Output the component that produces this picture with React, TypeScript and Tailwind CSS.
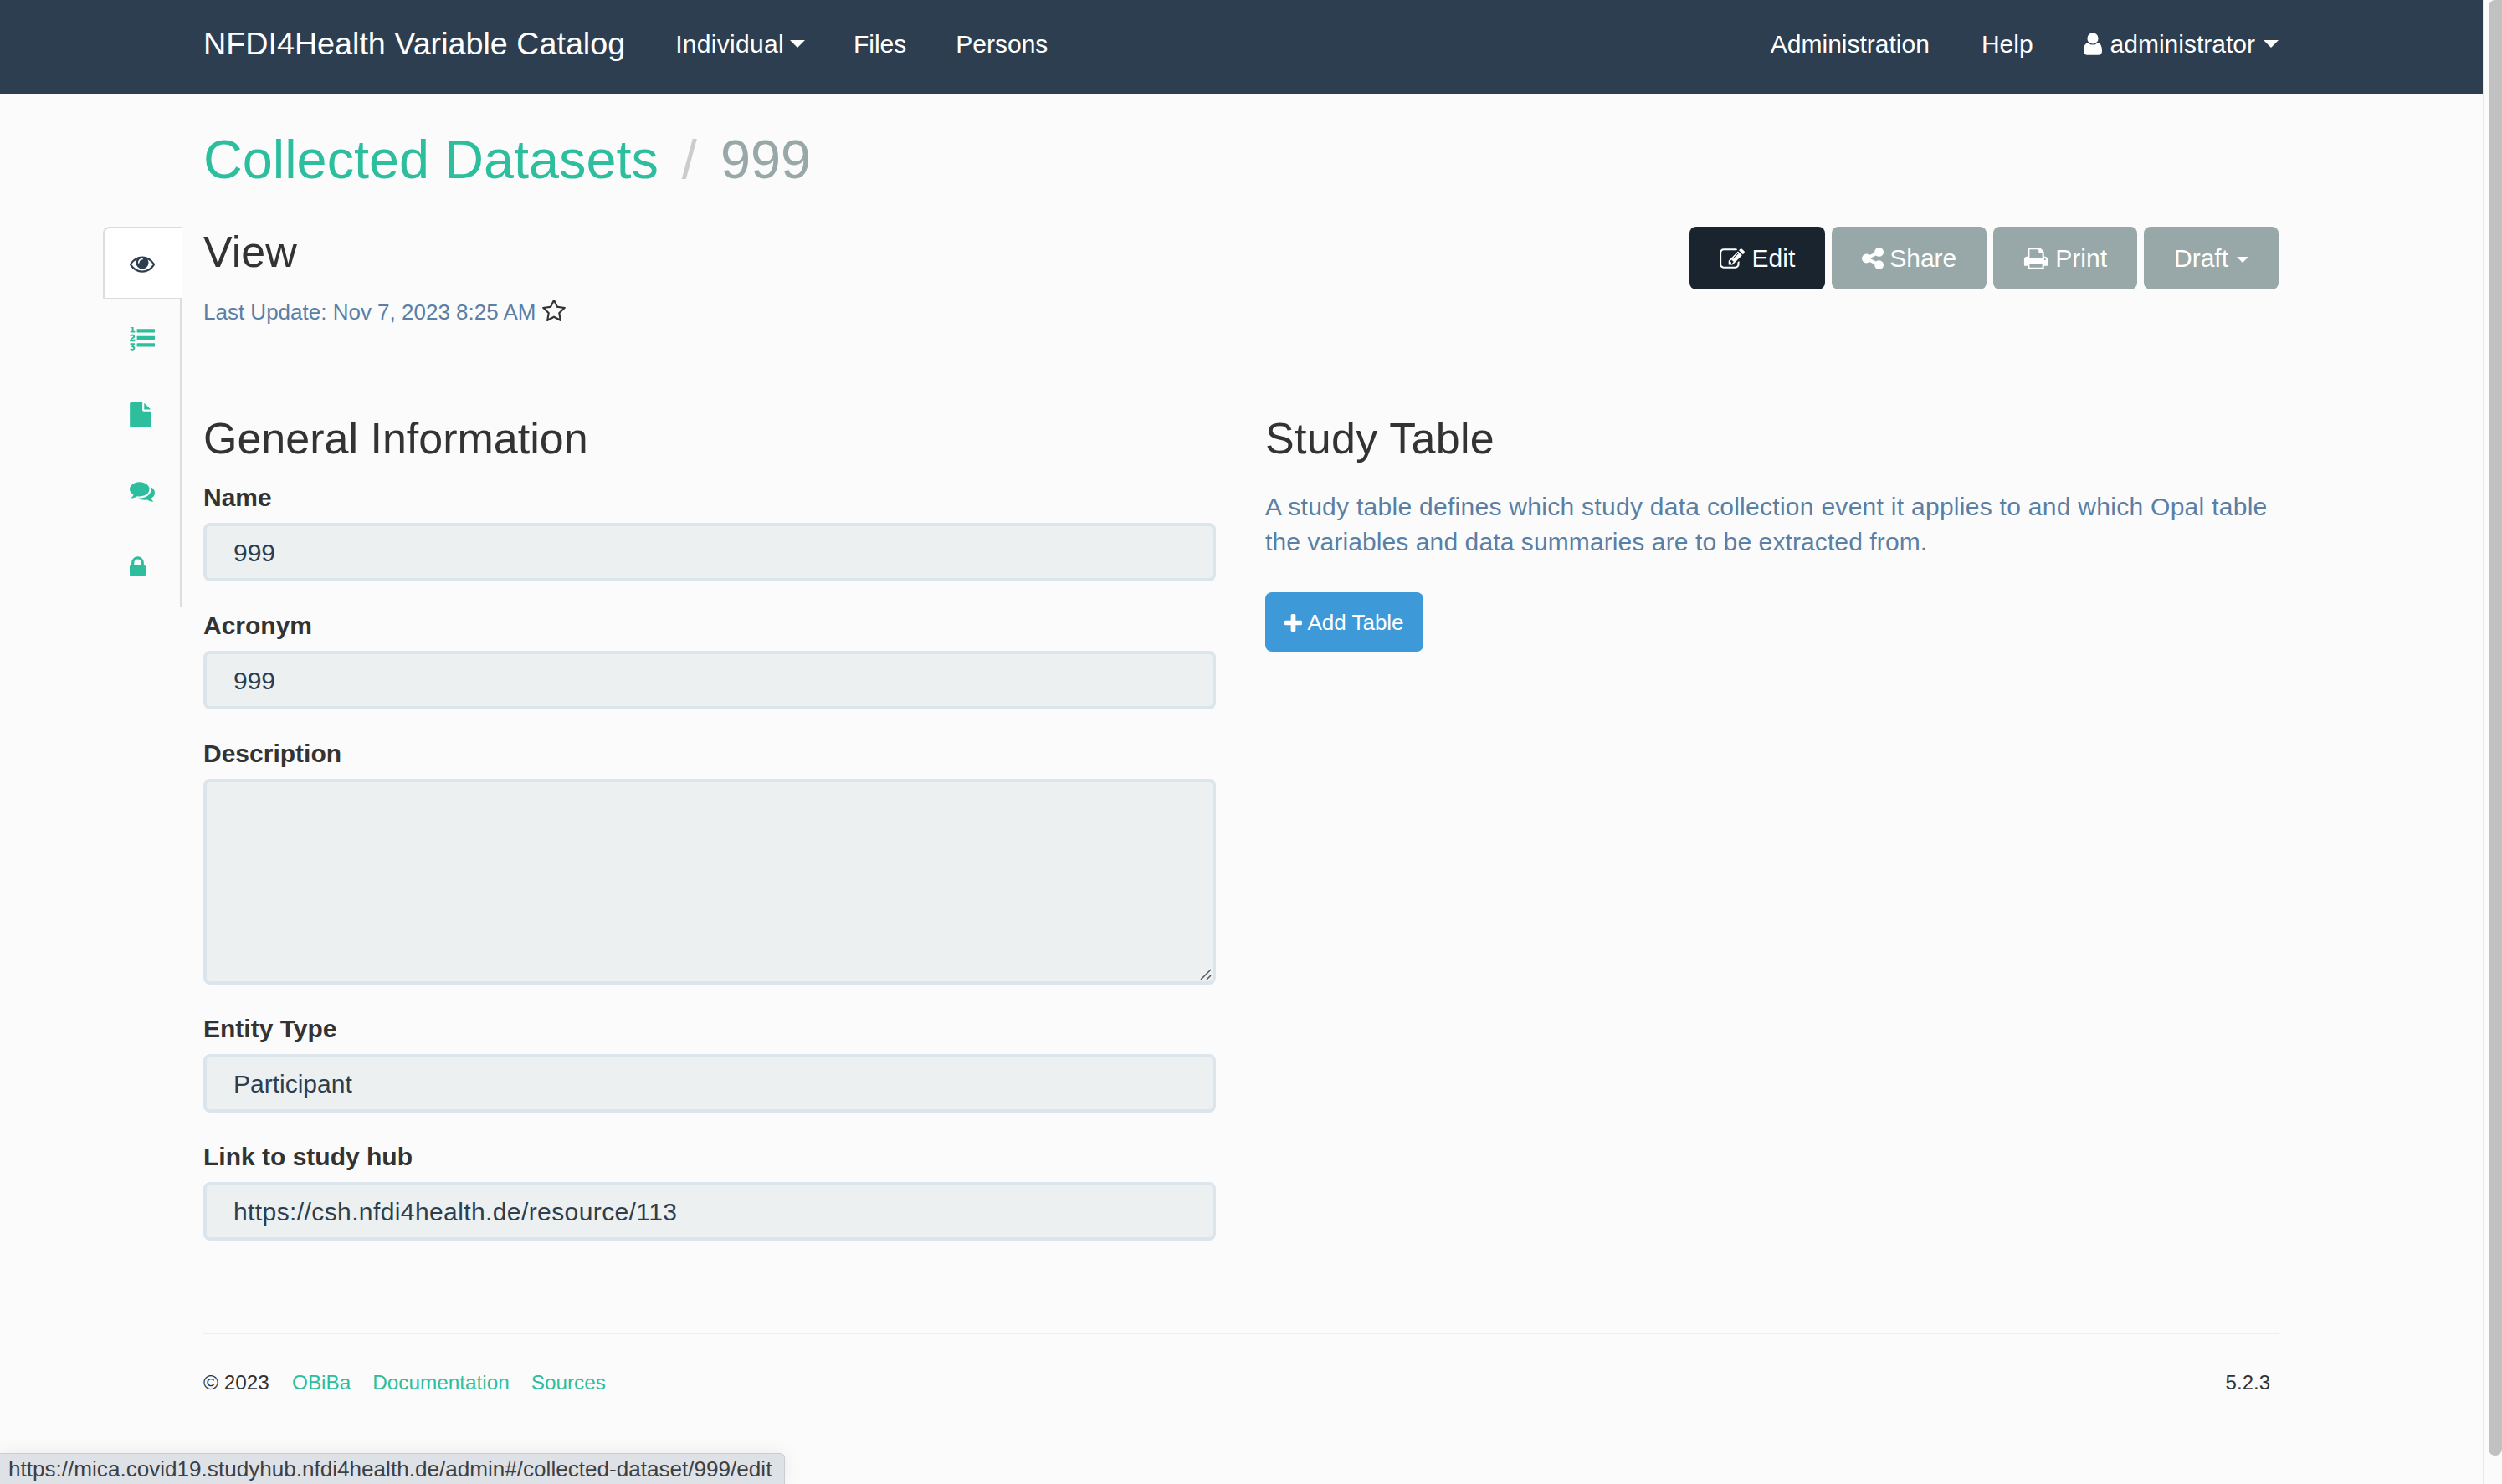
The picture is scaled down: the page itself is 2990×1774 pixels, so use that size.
const paths = {
  eye: "M1664 960q-152-236-381-353 61 104 61 225 0 185-131.5 316.5t-316.5 131.5-316.5-131.5-131.5-316.5q0-121 61-225-229 117-381 353 133 205 333.5 326.5t434.5 121.5 434.5-121.5 333.5-326.5zm-720-384q0-20-14-34t-34-14q-125 0-214.5 89.5t-89.5 214.5q0 20 14 34t34 14 34-14 14-34q0-86 61-147t147-61q20 0 34-14t14-34zm848 384q0 34-20 69-140 230-376.5 368.5t-499.5 138.5-499.5-139-376.5-368q-20-35-20-69t20-69q140-229 376.5-368t499.5-139 499.5 139 376.5 368q20 35 20 69z",
  listOl: "M381 1620q0 80-54.5 126t-135.5 46q-106 0-172-66l57-88q49 45 106 45 29 0 50.5-14.5t21.5-42.5q0-64-105-56l-26-56q8-10 32.5-43.5t42.5-54 37-38.5v-1q-16 0-48.5 1t-48.5 1v53h-106v-152h333v88l-95 115q51 12 81 49t30 88zm2-627v159h-362q-6-36-6-54 0-51 23.5-93t56.5-68 66-47.5 56.5-43.5 23.5-45q0-25-14.5-38.5t-39.5-13.5q-46 0-81 58l-85-59q24-51 71.5-79.5t105.5-28.5q73 0 123 41.5t50 112.5q0 50-34 91.5t-75 64.5-75.5 50.5-35.5 52.5h127v-60h105zm1409 319v192q0 13-9.5 22.5t-22.5 9.5h-1216q-13 0-22.5-9.5t-9.5-22.5v-192q0-14 9-23t23-9h1216q13 0 22.5 9.5t9.5 22.5zm-1408-899v99h-335v-99h107q0-41 .5-122t.5-121v-12h-2q-8 17-50 54l-71-76 136-127h106v404h108zm1408 387v192q0 13-9.5 22.5t-22.5 9.5h-1216q-13 0-22.5-9.5t-9.5-22.5v-192q0-14 9-23t23-9h1216q13 0 22.5 9.5t9.5 22.5zm0-512v192q0 13-9.5 22.5t-22.5 9.5h-1216q-13 0-22.5-9.5t-9.5-22.5v-192q0-13 9.5-22.5t22.5-9.5h1216q13 0 22.5 9.5t9.5 22.5z",
  file: "M1152 512v-472q22 14 36 28l408 408q14 14 28 36h-472zm-128 32q0 40 28 68t68 28h544v1056q0 40-28 68t-68 28h-1344q-40 0-68-28t-28-68v-1600q0-40 28-68t68-28h800v544z",
  comments: "M1408 768q0 139-94 257t-256.5 186.5-353.5 68.5q-86 0-176-16-124 88-278 128-36 9-86 16h-3q-11 0-20.5-8t-11.5-21q-1-3-1-6.5t.5-6.5 2-6l2.5-5 3.5-5.5 4-5 4.5-5 4-4.5q5-6 23-25t26-29.5 22.5-29 25-38.5 20.5-44q-124-72-195-177t-71-224q0-139 94-257t256.5-186.5 353.5-68.5 353.5 68.5 256.5 186.5 94 257zm384 256q0 120-71 224.5t-195 176.5q10 24 20.5 44t25 38.5 22.5 29 26 29.5 23 25q1 1 4 4.5t4.5 5 4 5 3.5 5.5l2.5 5 2 6 .5 6.5-1 6.5q-3 14-13 22t-22 7q-50-7-86-16-154-40-278-128-90 16-176 16-271 0-472-132 58 4 88 4 161 0 309-45t264-129q125-92 192-212t67-254q0-77-23-152 129 71 204 178t75 230z",
  lock: "M640 768h512v-192q0-106-75-181t-181-75-181 75-75 181v192zm832 96v576q0 40-28 68t-68 28h-960q-40 0-68-28t-28-68v-576q0-40 28-68t68-28h32v-192q0-184 132-316t316-132 316 132 132 316v192h32q40 0 68 28t28 68z",
  star: "M1201 1004l306-297-422-62-189-382-189 382-422 62 306 297-73 421 378-199 377 199zm527-357q0 22-26 48l-363 354 86 500q1 7 1 20 0 50-41 50-19 0-40-12l-449-236-449 236q-22 12-40 12-21 0-31.5-14.5t-10.5-35.5q0-6 2-20l86-500-364-354q-25-27-25-48 0-37 56-46l502-73 225-455q19-41 49-41t49 41l225 455 502 73q56 9 56 46z",
  user: "M1536 1399q0 109-62.5 187t-150.5 78h-854q-88 0-150.5-78t-62.5-187q0-85 8.5-160.5t31.5-152 58.5-131 94-89 134.5-34.5q131 128 313 128t313-128q76 0 134.5 34.5t94 89 58.5 131 31.5 152 8.5 160.5zm-256-887q0 159-112.5 271.5t-271.5 112.5-271.5-112.5-112.5-271.5 112.5-271.5 271.5-112.5 271.5 112.5 112.5 271.5z",
  edit: "M888 1184l116-116-152-152-116 116v56h96v96h56zm440-720q-16-16-33 1l-350 350q-17 17-1 33t33-1l350-350q17-17 1-33zm80 594v190q0 119-84.5 203.5t-203.5 84.5h-832q-119 0-203.5-84.5t-84.5-203.5v-832q0-119 84.5-203.5t203.5-84.5h832q63 0 117 25 15 7 18 23 3 17-9 29l-49 49q-14 14-32 8-23-6-45-6h-832q-66 0-113 47t-47 113v832q0 66 47 113t113 47h832q66 0 113-47t47-113v-126q0-13 9-22l64-64q15-15 35-7t20 29zm-96-738l288 288-672 672h-288v-288zm444 132l-92 92-288-288 92-92q28-28 68-28t68 28l152 152q28 28 28 68t-28 68z",
  share: "M1344 1024q133 0 226.5 93.5t93.5 226.5-93.5 226.5-226.5 93.5-226.5-93.5-93.5-226.5q0-12 2-34l-360-180q-92 86-218 86-133 0-226.5-93.5t-93.5-226.5 93.5-226.5 226.5-93.5q126 0 218 86l360-180q-2-22-2-34 0-133 93.5-226.5t226.5-93.5 226.5 93.5 93.5 226.5-93.5 226.5-226.5 93.5q-126 0-218-86l-360 180q2 22 2 34t-2 34l360 180q92-86 218-86z",
  print: "M448 1536h896v-256h-896v256zm0-640h896v-384h-160q-40 0-68-28t-28-68v-160h-640v640zm1152 64q0-26-19-45t-45-19-45 19-19 45 19 45 45 19 45-19 19-45zm128 0v416q0 13-9.5 22.5t-22.5 9.5h-224v160q0 40-28 68t-68 28h-960q-40 0-68-28t-28-68v-160h-224q-13 0-22.5-9.5t-9.5-22.5v-416q0-79 56.5-135.5t135.5-56.5h64v-544q0-40 28-68t68-28h672q40 0 88 20t76 48l152 152q28 28 48 76t20 88v256h64q79 0 135.5 56.5t56.5 135.5z",
  plus: "M1600 736v192q0 40-28 68t-68 28h-416v416q0 40-28 68t-68 28h-192q-40 0-68-28t-28-68v-416h-416q-40 0-68-28t-28-68v-192q0-40 28-68t68-28h416v-416q0-40 28-68t68-28h192q40 0 68 28t28 68v416h416q40 0 68 28t28 68z",
};

function Icon({ d, box, className }: { d: string; box: string; className: string }) {
  return (
    <svg viewBox={box} className={className} fill="currentColor">
      <path d={d} />
    </svg>
  );
}

function Field({ label, value, wide }: { label: string; value: string; wide?: boolean }) {
  return (
    <div className="mt-[32px]">
      <label className="block font-bold text-[30px] leading-[42px] mb-[9px]">{label}</label>
      <div
        className={
          wide
            ? "h-[70px] rounded-lg border-4 border-[#dce4ec] bg-[#ecf0f1] px-8 text-[30px] leading-[64px] tracking-[0.4px] text-[#2c3e50]"
            : "h-[70px] rounded-lg border-4 border-[#dce4ec] bg-[#ecf0f1] px-8 text-[30px] leading-[64px] text-[#2c3e50]"
        }
      >
        {value}
      </div>
    </div>
  );
}

function ActionButton({ children }: { children: React.ReactNode }) {
  return (
    <button className="flex h-[75px] items-center rounded-lg bg-[#98a7a7] px-9 text-[30px] text-white">
      {children}
    </button>
  );
}

export default function App() {
  return (
    <div
      className="relative flex h-[1774px] w-full overflow-hidden bg-[#fbfbfb] text-[#333333]"
      style={{ fontFamily: '"Liberation Sans", Arial, sans-serif' }}
    >
      <div className="w-[2967px] shrink-0">
        <nav className="flex h-[112px] items-start justify-between bg-[#2c3e50] pl-[243px] pr-[244px] text-white">
          <div className="flex h-[104px] items-center">
            <a className="mr-[60px] text-[37.7px]">NFDI4Health Variable Catalog</a>
            <div className="flex items-center text-[30px]">
              <a className="mr-[58px] flex items-center gap-[7px]">
                <span className="tracking-[0.3px]">Individual</span>
                <span className="h-0 w-0 border-x-[9px] border-t-[9px] border-x-transparent border-t-white" />
              </a>
              <a className="mr-[59px]">Files</a>
              <a>Persons</a>
            </div>
          </div>
          <div className="flex h-[104px] items-center text-[30px]">
            <a className="mr-[62px]">Administration</a>
            <a className="mr-[60px]">Help</a>
            <a className="flex items-center gap-[10px]">
              <span className="flex items-center gap-[10px]">
                <Icon d={paths.user} box="256 128 1280 1536" className="h-[27px] w-[22px]" />
                administrator
              </span>
              <span className="h-0 w-0 border-x-[9px] border-t-[9px] border-x-transparent border-t-white" />
            </a>
          </div>
        </nav>

        <h1 className="ml-[243px] mt-[39px] h-[80px] text-[64.8px] leading-[80px]">
          <a className="text-[#2dbe9d]">Collected Datasets</a>
          <span className="mx-[28px] text-[#cccccc]">/</span>
          <span className="text-[#98a7a7]">999</span>
        </h1>

        <div className="ml-[123px] mt-[40px] flex">
          <div className="w-[94px] shrink-0">
            <div className="flex h-[87px] items-center rounded-tl-lg border-y-2 border-l-2 border-[#dddddd] bg-white pl-[30px] text-[#2c3e50]">
              <Icon d={paths.eye} box="0 0 1792 1792" className="h-[30px] w-[30px]" />
            </div>
            <div className="h-[368px] border-r-2 border-[#dddddd] pl-[32px] pt-[1px] text-[#2dbe9d]">
              <div className="flex h-[91px] items-center">
                <Icon d={paths.listOl} box="0 128 1792 1792" className="mt-[3px] h-[30px] w-[30px]" />
              </div>
              <div className="flex h-[91px] items-center">
                <Icon d={paths.file} box="128 0 1536 1792" className="h-[30px] w-[26px]" />
              </div>
              <div className="flex h-[91px] items-center">
                <Icon d={paths.comments} box="0 0 1792 1792" className="h-[30px] w-[30px]" />
              </div>
              <div className="flex h-[91px] items-center">
                <Icon d={paths.lock} box="320 0 1152 1792" className="h-[30px] w-[19px]" />
              </div>
            </div>
          </div>

          <div className="ml-[26px] w-[2480px]">
            <div className="flex items-start justify-between">
              <div>
                <h3 className="text-[52px] leading-[60px]">View</h3>
                <div className="mt-[24px] flex h-[36px] items-center text-[26px] text-[#5a7fa5]">
                  Last Update: Nov 7, 2023 8:25 AM
                  <Icon d={paths.star} box="64 128 1664 1664" className="ml-[8px] h-[28px] w-[28px] text-[#333333]" />
                </div>
              </div>
              <div className="flex gap-2">
                <button className="flex h-[75px] items-center rounded-lg bg-[#1a242f] px-9 text-[30px] text-white">
                  <Icon d={paths.edit} box="0 128 1792 1408" className="mr-[9px] h-[24px] w-[30px]" />
                  Edit
                </button>
                <ActionButton>
                  <Icon d={paths.share} box="128 128 1536 1536" className="mr-[7px] h-[26px] w-[26px]" />
                  Share
                </ActionButton>
                <ActionButton>
                  <Icon d={paths.print} box="64 128 1664 1536" className="mr-[8px] h-[26px] w-[30px]" />
                  Print
                </ActionButton>
                <ActionButton>
                  Draft
                  <span className="ml-[10px] mt-1 h-0 w-0 border-x-[7px] border-t-[7px] border-x-transparent border-t-white" />
                </ActionButton>
              </div>
            </div>

            <div className="mt-[103px] grid grid-cols-[1210px_1fr] gap-x-[59px]">
              <div>
                <h3 className="mb-[-12px] text-[52px] leading-[60px]">General Information</h3>
                <Field label="Name" value="999" />
                <Field label="Acronym" value="999" />
                <div className="mt-[32px]">
                  <label className="mb-[9px] block text-[30px] font-bold leading-[42px]">Description</label>
                  <div className="relative h-[246px] rounded-lg border-4 border-[#dce4ec] bg-[#ecf0f1]">
                    <svg viewBox="0 0 16 16" className="absolute bottom-0 right-0 h-4 w-4" stroke="#555555" strokeWidth="1.5">
                      <path d="M2 14L14 2M9 14L14 9" />
                    </svg>
                  </div>
                </div>
                <Field label="Entity Type" value="Participant" />
                <Field label="Link to study hub" value="https://csh.nfdi4health.de/resource/113" wide />
              </div>
              <div>
                <h3 className="text-[52px] leading-[60px] tracking-[0.3px]">Study Table</h3>
                <p className="mt-[31px] text-[30px] leading-[42px] text-[#5a7fa5]">
                  <span className="block whitespace-nowrap tracking-[0.28px]">
                    A study table defines which study data collection event it applies to and which Opal table
                  </span>
                  <span className="block whitespace-nowrap tracking-[0.1px]">
                    the variables and data summaries are to be extracted from.
                  </span>
                </p>
                <button className="mt-[39px] flex h-[71px] w-[189px] items-center justify-center rounded-lg bg-[#3d99d8] pt-[2px] text-[26px] text-white">
                  <Icon d={paths.plus} box="192 128 1408 1408" className="mr-[6px] h-[21px] w-[21px]" />
                  Add Table
                </button>
              </div>
            </div>
          </div>
        </div>

        <footer className="ml-[243px] mt-[110px] w-[2480px] border-t-2 border-[#eeeeee] pt-[37px]">
          <div className="flex h-[42px] items-center justify-between pr-[10px] text-[24px]">
            <div className="flex gap-[26px] text-[24.3px]">
              <span className="w-[80px] whitespace-nowrap">© 2023</span>
              <a className="text-[#2dbe9d]">OBiBa</a>
              <a className="text-[#2dbe9d]">Documentation</a>
              <a className="text-[#2dbe9d]">Sources</a>
            </div>
            <span>5.2.3</span>
          </div>
        </footer>
      </div>

      <div className="flex-1 border-l-2 border-[#e8e8e8] pl-[5px]">
        <div className="h-[1740px] rounded-b-lg rounded-tl-lg bg-[#c1c1c1]" />
      </div>

      <div className="absolute bottom-0 left-0 flex h-[37px] w-[938px] items-center rounded-tr-md border-r border-t border-[#c9ccd1] bg-[#dee1e6] pl-[10px] pt-[2px] text-[26.1px] text-[#3c4043] shadow-[0_0_20px_rgba(0,0,0,0.08)]">
        https://mica.covid19.studyhub.nfdi4health.de/admin#/collected-dataset/999/edit
      </div>
    </div>
  );
}
